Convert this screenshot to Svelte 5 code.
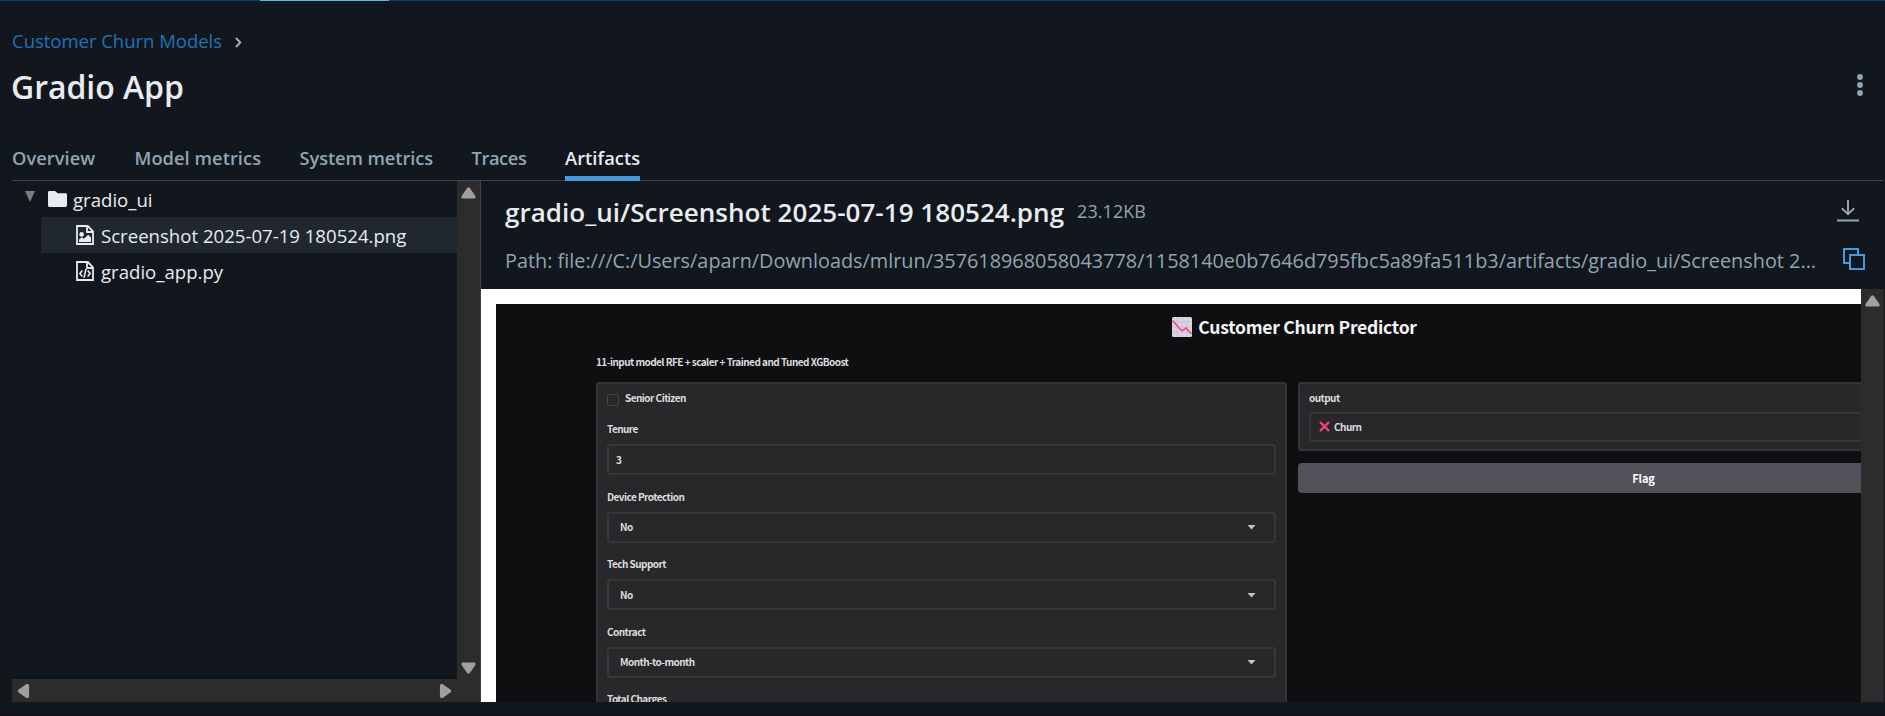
<script>
  const tabs = [
    { label: 'Overview', width: 83.5, spacing: 0.05 },
    { label: 'Model metrics', width: 126, spacing: 0.05 },
    { label: 'System metrics', width: 133, spacing: -0.1 },
    { label: 'Traces', width: 54.5, spacing: -0.4 },
    { label: 'Artifacts', width: 75, spacing: 0.05, active: true },
  ];
  const fields = [
    { label: 'Tenure', value: '3' },
    { label: 'Device Protection', value: 'No', select: true },
    { label: 'Tech Support', value: 'No', select: true },
    { label: 'Contract', value: 'Month-to-month', select: true },
    { label: 'Total Charges', value: '' },
  ];
  const path =
    'file:///C:/Users/aparn/Downloads/mlrun/357618968058043778/1158140e0b7646d795fbc5a89fa511b3/artifacts/gradio_ui/Screenshot 2...';
</script>

{#snippet arrow(dir)}
  <svg class="arrow {dir}" width="15" height="12" viewBox="0 0 15 12">
    <path d="M6 1.2Q7.5-.6 9 1.2L14.4 9Q15.2 11.6 12.8 11.6H2.2Q-.2 11.6.6 9Z" fill="#9f9f9f" />
  </svg>
{/snippet}

<div class="page">
  <div class="topline"><span></span></div>
  <header>
    <nav class="crumbs">
      <a href="#models">Customer Churn Models</a>
      <svg width="7" height="11" viewBox="0 0 7 11"><path d="M1 1l4.3 4.5L1 10" fill="none" stroke="#a3b2bf" stroke-width="1.9" /></svg>
    </nav>
    <div class="titlebar">
      <h1>Gradio App</h1>
      <svg width="6" height="22" viewBox="0 0 6 22" fill="#92a4b3"><circle cx="3" cy="3" r="2.9" /><circle cx="3" cy="11" r="2.9" /><circle cx="3" cy="19" r="2.9" /></svg>
    </div>
    <div class="tabs">
      {#each tabs as t}
        <div class="tab" class:active={t.active} style="width:{t.width}px;letter-spacing:{t.spacing}px">{t.label}</div>
      {/each}
    </div>
  </header>

  <main>
    <aside>
      <div class="treewrap">
        <div class="tree">
          <div class="row root">
            <svg class="caret" width="10" height="11" viewBox="0 0 10 11"><path d="M0 0h10L5 11z" fill="#7d7d7d" /></svg>
            <svg class="folder" width="19" height="16" viewBox="0 0 19 16"><path d="M0 1.2Q0 0 1.2 0H6.6Q7.2 0 7.7.5L9.6 2.2H17.8Q19 2.2 19 3.4V14.6Q19 16 17.6 16H1.4Q0 16 0 14.6Z" fill="#e8ecf0" /></svg>
            <span>gradio_ui</span>
          </div>
          <div class="row leaf selected">
            <svg width="18" height="20" viewBox="0 0 18 20"><path d="M1 1h10.7L17 6.3V19H1zM11 1v6h6" fill="none" stroke="#e8ecf0" stroke-width="1.8" /><circle cx="5.6" cy="9.4" r="2.3" fill="#e8ecf0" /><path d="M3 17v-2.6l3-2.2 2 1.6 4.2-4L15 12.4V17z" fill="#e8ecf0" /></svg>
            <span>Screenshot 2025-07-19 180524.png</span>
          </div>
          <div class="row leaf">
            <svg width="18" height="20" viewBox="0 0 18 20" fill="none" stroke="#e8ecf0"><path d="M1 1h10.7L17 6.3V19H1zM11 1v6h6" stroke-width="1.8" /><path d="M6.3 9.6L3.9 12.5l2.4 2.9M11.7 9.6l2.4 2.9-2.4 2.9M10 7.8L8 16.8" stroke-width="1.6" /></svg>
            <span>gradio_app.py</span>
          </div>
        </div>
        <div class="vbar">{@render arrow('up')}{@render arrow('down')}</div>
      </div>
      <div class="hbar">{@render arrow('left')}{@render arrow('right')}</div>
    </aside>

    <section>
      <div class="info">
        <div class="line1">
          <h2>gradio_ui/Screenshot 2025-07-19 180524.png</h2>
          <span class="size">23.12KB</span>
          <svg width="22" height="22" viewBox="0 0 22 22" fill="none" stroke="#92a4b3" stroke-width="2"><path d="M11 0v14M4.8 8.2L11 14.2l6.2-6M0 20.5h22" /></svg>
        </div>
        <div class="line2">
          <span>Path: {path}</span>
          <svg width="22" height="22" viewBox="0 0 22 22" fill="none" stroke="#4299e0" stroke-width="2"><path d="M6 15H1V1h14v5" /><path d="M7 7h14v14H7z" /></svg>
        </div>
      </div>
      <div class="viewer">
        <div class="canvas">
          <div class="shot">
            <div class="heading">
              <svg width="20" height="20" viewBox="0 0 20 20"><rect width="20" height="20" rx="1.5" fill="#dcd3e3" /><path d="M5 0v20M10 0v20M15 0v20M0 5h20M0 10h20M0 15h20" stroke="#c8bcd2" stroke-width=".8" /><path d="M.5 3.5L9 13l1.5.6 3.5-2.6 5.5 6" fill="none" stroke="#f0547c" stroke-width="1.8" /></svg>
              <span>Customer Churn Predictor</span>
            </div>
            <p class="sub">11-input model RFE + scaler + Trained and Tuned XGBoost</p>
            <div class="cols">
              <div class="card form">
                <div class="check"><i></i><span>Senior Citizen</span></div>
                {#each fields as f}
                  <div class="field">
                    <span class="label">{f.label}</span>
                    <div class="box" class:select={f.select}>
                      <span>{f.value}</span>
                      {#if f.select}<svg width="9" height="5" viewBox="0 0 9 5"><path d="M.5 0h8L4.5 4.6z" fill="#c4c4c8" /></svg>{/if}
                    </div>
                  </div>
                {/each}
              </div>
              <div class="right">
                <div class="card out">
                  <span class="label">output</span>
                  <div class="box">
                    <svg width="11" height="11" viewBox="0 0 11 11"><path d="M1 1l9 9M10 1l-9 9" stroke="#f04470" stroke-width="2.4" /></svg>
                    <span>Churn</span>
                  </div>
                </div>
                <div class="flag">Flag</div>
              </div>
            </div>
          </div>
        </div>
        <div class="vbar">{@render arrow('up')}</div>
      </div>
    </section>
  </main>
</div>

<style>
  :global(body) { background: #11171c; overflow: hidden; }
  .page { box-sizing: border-box; width: 1885px; height: 716px; background: #11171d; color: #e8ecf0; font-family: 'Open Sans', 'Noto Sans', sans-serif; border-bottom: 1px solid #190d19; overflow: hidden; }
  svg { display: block; flex: none; }
  h1, h2, p { margin: 0; }
  .topline { height: 1px; background: #0b3a7c; }
  .topline span { display: block; width: 129px; height: 1px; margin-left: 260px; background: #3fc0ee; }
  header { padding: 25px 1px 0 12px; }
  .crumbs { display: flex; align-items: center; gap: 13px; height: 30px; font-size: 18.5px; line-height: 30px; }
  .crumbs a { color: #2272b4; text-decoration: none; letter-spacing: -0.02px; }
  .crumbs svg { margin-top: 3px; }
  .titlebar { display: flex; justify-content: space-between; height: 48px; margin-top: 7px; padding-right: 21px; }
  h1 { margin-left: -1px; font-size: 32px; line-height: 47px; font-weight: 600; letter-spacing: -0.05px; }
  .titlebar svg { margin-top: 11px; }
  .tabs { display: flex; gap: 39px; height: 37px; margin-top: 32px; border-bottom: 1px solid #37444f; font-size: 18.3px; line-height: 30px; font-weight: 600; color: #92a4b3; white-space: nowrap; }
  .tab { height: 33px; }
  .tab.active { color: #e8ecf0; border-bottom: 5px solid #4299e0; }
  main { display: flex; height: 521px; padding: 0 1px 0 12px; }
  aside { display: flex; flex-direction: column; width: 468px; border-right: 1px solid #37444f; }
  .treewrap { display: flex; flex: 1; }
  .tree { flex: 1; font-size: 18.6px; }
  .row { display: flex; align-items: center; height: 36px; box-sizing: border-box; white-space: nowrap; }
  .row span { padding-bottom: 0; }
  .caret { margin: -8px 13px 0 13px; transform: translateY(1px); }
  .folder { margin: 0 6px 0 0; }
  .leaf { margin-left: 29px; padding-left: 35px; gap: 7px; }
  .selected { background: #20272e; }
  .vbar { display: flex; flex-direction: column; align-items: center; justify-content: space-between; width: 23px; padding: 6px 0 5px; box-sizing: border-box; background: #2c2c2c; }
  .hbar { display: flex; align-items: center; justify-content: space-between; height: 23px; padding: 0 27px 0 4px; background: #2c2c2c; }
  .down { transform: rotate(180deg); }
  .left { transform: rotate(-90deg); }
  .right.arrow { transform: rotate(90deg); }
  section { flex: 1; min-width: 0; display: flex; flex-direction: column; }
  .info { height: 108px; box-sizing: border-box; padding: 13px 19px 0 24px; }
  .line1 { display: flex; height: 36px; margin-bottom: 15px; }
  h2 { font-size: 26px; line-height: 36px; font-weight: 600; letter-spacing: 0.03px; }
  .size { margin: 2px auto 0 13px; font-size: 18px; line-height: 30px; color: #92a4b3; letter-spacing: 0.05px; }
  .line1 svg { margin: 6px 6px 0 0; }
  .line2 { display: flex; justify-content: space-between; height: 30px; font-size: 19.85px; line-height: 32px; color: #92a4b3; white-space: nowrap; }
  .line2 svg { margin-top: 3px; }
  .viewer { display: flex; flex: 1; min-height: 0; }
  .canvas { flex: 1; min-width: 0; box-sizing: border-box; padding: 15px 0 0 15px; background: #fff; overflow: hidden; }
  .shot { width: 1510px; height: 800px; box-sizing: border-box; padding: 9px 17px 0 100px; background: #0f0f11; color: #dcdcdf; font: 700 10px/16px 'Noto Sans CJK SC', sans-serif; letter-spacing: -0.54px; }
  .heading { display: flex; align-items: center; justify-content: center; gap: 6px; height: 26px; padding-left: 4px; font-size: 17.5px; line-height: 26px; letter-spacing: -0.25px; color: #f4f4f5; }
  .heading svg { margin-top: 1px; }
  .heading span { padding-top: 2px; }
  .sub { margin-top: 15px; }
  .cols { display: flex; align-items: flex-start; gap: 12px; margin-top: 12px; }
  .card { box-sizing: border-box; background: #28282a; border: 2px solid #343438; border-radius: 3px; padding: 6px 9px; }
  .form { width: 691px; height: 500px; overflow: hidden; }
  .check { display: flex; gap: 6px; height: 16px; margin-bottom: 15px; }
  .check i { width: 12px; height: 12px; box-sizing: border-box; margin-top: 4px; border: 1.5px solid #3f3f46; border-radius: 2px; }
  .field { height: 67.5px; }
  .label { display: block; height: 16px; margin-bottom: 7px; }
  .box { display: flex; align-items: center; justify-content: space-between; box-sizing: border-box; height: 31px; border: 2px solid #36363b; border-radius: 3px; padding: 0 7px; }
  .box.select { padding: 0 18px 0 11px; }
  .box.select svg { margin-top: 1px; }
  .right:not(.arrow) { flex: 1; margin-left: -1px; }
  .out { height: 69px; }
  .out .label { margin-bottom: 6px; }
  .out .box { height: 30px; justify-content: flex-start; gap: 4px; padding: 0 8px 1px; }
  .flag { height: 30px; margin-top: 12px; border-radius: 4px; background: #52525b; color: #fff; font-size: 11px; line-height: 31px; letter-spacing: -0.1px; text-align: center; }
</style>
